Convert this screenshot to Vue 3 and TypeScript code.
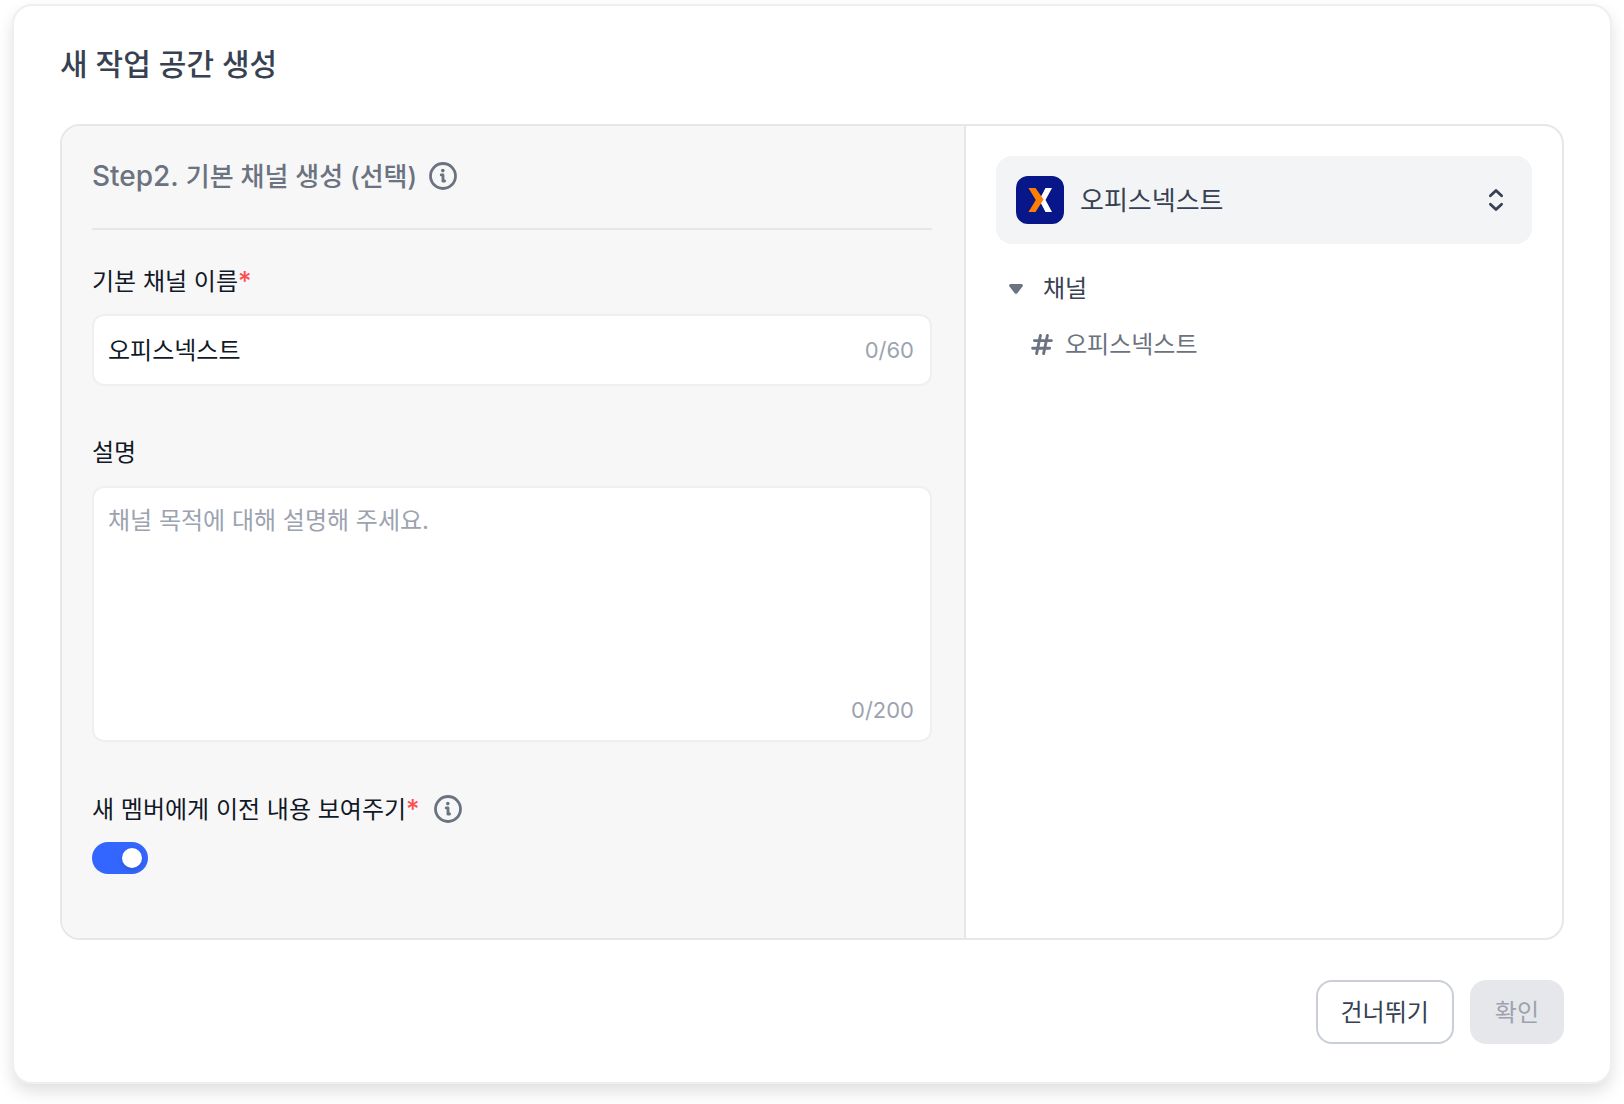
<script setup lang="ts">
import { ref } from 'vue'

const workspace = ref('오피스넥스트')
const channelName = ref('오피스넥스트')
const description = ref('')
const showHistory = ref(true)
const channelsOpen = ref(true)
const NAME_LIMIT = 60
const DESCRIPTION_LIMIT = 200
</script>

<template>
  <main class="dialog">
    <h1 class="title">새 작업 공간 생성</h1>

    <div class="panel">
      <form class="form" @submit.prevent>
        <div class="step">
          <h2 class="step-title"><span class="step-number">Step2.</span> 기본 채널 생성 (선택)</h2>
          <button type="button" class="info" aria-label="채널 안내">
            <svg width="28" height="28" viewBox="0 0 28 28" fill="none" stroke="currentColor">
              <circle cx="14" cy="14" r="12.5" stroke-width="2.8" />
              <path d="M12.2 12.9h1.8v5.9M13.8 19h1.8" stroke-width="2.8" stroke-linecap="round" stroke-linejoin="round" />
              <circle cx="13.8" cy="8.6" r="1.8" fill="currentColor" stroke="none" />
            </svg>
          </button>
        </div>

        <div class="field">
          <label class="label" for="channel-name">기본 채널 이름<span class="required">*</span></label>
          <div class="box box-line">
            <input id="channel-name" v-model="channelName" class="control" type="text" :maxlength="NAME_LIMIT" />
            <span class="count">0/{{ NAME_LIMIT }}</span>
          </div>
        </div>

        <div class="field">
          <label class="label" for="channel-description">설명</label>
          <div class="box box-area">
            <textarea
              id="channel-description"
              v-model="description"
              class="control area"
              placeholder="채널 목적에 대해 설명해 주세요."
              :maxlength="DESCRIPTION_LIMIT"
            ></textarea>
            <span class="count">{{ description.length }}/{{ DESCRIPTION_LIMIT }}</span>
          </div>
        </div>

        <div class="field">
          <div class="label-row">
            <label class="label" for="show-history">새 멤버에게 이전 내용 보여주기<span class="required">*</span></label>
            <button type="button" class="info" aria-label="이전 내용 안내">
              <svg width="28" height="28" viewBox="0 0 28 28" fill="none" stroke="currentColor">
                <circle cx="14" cy="14" r="12.5" stroke-width="2.8" />
                <path d="M12.2 12.9h1.8v5.9M13.8 19h1.8" stroke-width="2.8" stroke-linecap="round" stroke-linejoin="round" />
                <circle cx="13.8" cy="8.6" r="1.8" fill="currentColor" stroke="none" />
              </svg>
            </button>
          </div>
          <input id="show-history" v-model="showHistory" class="switch" type="checkbox" />
        </div>
      </form>

      <aside class="preview">
        <div class="workspace">
          <svg class="logo" width="48" height="48" viewBox="0 0 48 48" aria-hidden="true">
            <rect width="48" height="48" rx="12" fill="#071689" />
            <path d="M29.5 12H36L29.5 24L36 36H29.5L24 25.5V22.5Z" fill="#fff" />
            <path d="M12.5 12H19.5L27.5 23.5L19.5 36H12.5L19.8 24Z" fill="#ff8000" />
          </svg>
          <select v-model="workspace" class="workspace-select" aria-label="작업 공간">
            <option>오피스넥스트</option>
          </select>
          <svg width="24" height="24" viewBox="0 0 24 24" fill="none" stroke="#374151" stroke-width="2.8" stroke-linecap="round" stroke-linejoin="round" aria-hidden="true">
            <path d="M6.4 7.8 12 2.4l5.6 5.4M6.4 16.2 12 21.6l5.6-5.4" />
          </svg>
        </div>

        <button type="button" class="group" :aria-expanded="channelsOpen" @click="channelsOpen = !channelsOpen">
          <svg width="14" height="10" viewBox="0 0 14 10" aria-hidden="true">
            <path d="M2 0H12C13.6 0 14.4 1.4 13.5 2.6L8.5 9.1C7.7 10.2 6.3 10.2 5.5 9.1L.5 2.6C-.4 1.4 .4 0 2 0Z" fill="#6b7280" />
          </svg>
          채널
        </button>
        <ul v-if="channelsOpen" class="channels">
          <li>
            <a href="#" class="channel">
              <svg width="22" height="22" viewBox="0 0 22 22" fill="none" stroke="#6b7280" stroke-width="2.9" stroke-linecap="round" aria-hidden="true">
                <path d="M3.4 6.6H20.4M1.6 14.2H18.6M9.4 1.5 5.6 19.6M16.4 1.5 12.6 19.6" />
              </svg>
              {{ channelName }}
            </a>
          </li>
        </ul>
      </aside>
    </div>

    <footer class="actions">
      <button type="button" class="button skip">건너뛰기</button>
      <button type="button" class="button confirm" disabled>확인</button>
    </footer>
  </main>
</template>

<style>
body {
  background: #fff;
}
</style>

<style scoped>
.dialog,
.dialog * {
  box-sizing: border-box;
}

.dialog {
  margin: 4px 12px 20px;
  padding: 30px 46px 38px;
  border: 2px solid #efefef;
  border-radius: 20px;
  background: #fff;
  box-shadow: 0 8px 16px rgba(0, 0, 0, 0.12);
  font-family: Inter, 'Noto Sans CJK KR', sans-serif;
  color: #111827;
}

.dialog button,
.dialog input,
.dialog textarea,
.dialog select {
  font-family: inherit;
}

.title {
  margin: 0 0 32px;
  font-size: 30px;
  line-height: 56px;
  font-weight: 500;
  color: #374151;
}

.panel {
  display: grid;
  grid-template-columns: 226fr 149fr;
  border: 2px solid #e5e7eb;
  border-radius: 20px;
  overflow: hidden;
}

.form {
  display: flex;
  flex-direction: column;
  gap: 50px;
  padding: 30px 32px 64px 30px;
  border-right: 2px solid #e5e7eb;
  background: #f7f7f7;
}

.step {
  display: flex;
  align-items: center;
  gap: 12px;
  height: 74px;
  margin-bottom: -16px;
  padding-bottom: 32px;
  border-bottom: 2px solid #e5e7eb;
  color: #6b7280;
}

.step-title {
  margin: 0;
  font-size: 26px;
  line-height: 40px;
  font-weight: 500;
}

.step-number {
  font-size: 28px;
}

.info {
  display: flex;
  padding: 0;
  border: 0;
  background: none;
  color: #6b7280;
}

.field {
  display: flex;
  flex-direction: column;
  gap: 16px;
}

.label-row {
  display: flex;
  align-items: center;
  gap: 14px;
  height: 34px;
}

.label {
  height: 34px;
  font-size: 24px;
  line-height: 34px;
}

.required {
  font-size: 26px;
  font-weight: 500;
  color: #ff4d4f;
}

.box {
  display: flex;
  padding: 0 16px 0 14px;
  border: 2px solid #efefef;
  border-radius: 12px;
  background: #fff;
}

.box-line {
  height: 72px;
  align-items: center;
}

.box-area {
  height: 256px;
  flex-direction: column;
  padding-top: 16px;
  padding-bottom: 13px;
}

.control {
  flex: 1;
  min-width: 0;
  padding: 2px 0 0;
  border: 0;
  outline: 0;
  background: none;
  font-size: 24px;
  line-height: 34px;
  color: #111827;
}

.control::placeholder {
  color: #9ca3af;
  opacity: 1;
}

.area {
  padding: 0;
  resize: none;
}

.count {
  align-self: flex-end;
  font-size: 22px;
  line-height: 34px;
  color: #9ca3af;
}

.box-line .count {
  align-self: center;
}

.switch {
  appearance: none;
  display: flex;
  align-items: center;
  width: 56px;
  height: 32px;
  margin: 0;
  padding: 0 6px;
  border-radius: 16px;
  background: #d1d5db;
}

.switch::before {
  content: '';
  width: 20px;
  height: 20px;
  border-radius: 50%;
  background: #fff;
  box-shadow: 0 2px 4px rgba(0, 35, 11, 0.2);
}

.switch:checked {
  justify-content: flex-end;
  background: #3366ff;
}

.preview {
  padding: 30px;
}

.workspace {
  display: flex;
  align-items: center;
  gap: 16px;
  height: 88px;
  padding: 0 24px 0 20px;
  border-radius: 16px;
  background: #f3f4f6;
}

.workspace-select {
  appearance: none;
  flex: 1;
  min-width: 0;
  padding: 2px 0 0;
  border: 0;
  background: none;
  font-size: 26px;
  line-height: 40px;
  color: #374151;
}

.group {
  display: flex;
  align-items: center;
  gap: 20px;
  margin-top: 28px;
  padding: 0 13px;
  border: 0;
  background: none;
  font-size: 24px;
  line-height: 34px;
  color: #374151;
}

.channels {
  margin: 22px 0 0;
  padding: 0 0 0 35px;
  list-style: none;
}

.channel {
  display: flex;
  align-items: center;
  gap: 12px;
  font-size: 24px;
  line-height: 34px;
  color: #6b7280;
  text-decoration: none;
}

.actions {
  display: flex;
  justify-content: flex-end;
  gap: 16px;
  margin-top: 40px;
}

.button {
  height: 64px;
  padding: 2px 23px 0;
  border: 2px solid #c9ced9;
  border-radius: 16px;
  background: #fff;
  font-size: 24px;
  line-height: 34px;
  color: #374151;
}

.confirm {
  border-color: #e5e7eb;
  background: #e5e7eb;
  color: #9ca3af;
}
</style>
